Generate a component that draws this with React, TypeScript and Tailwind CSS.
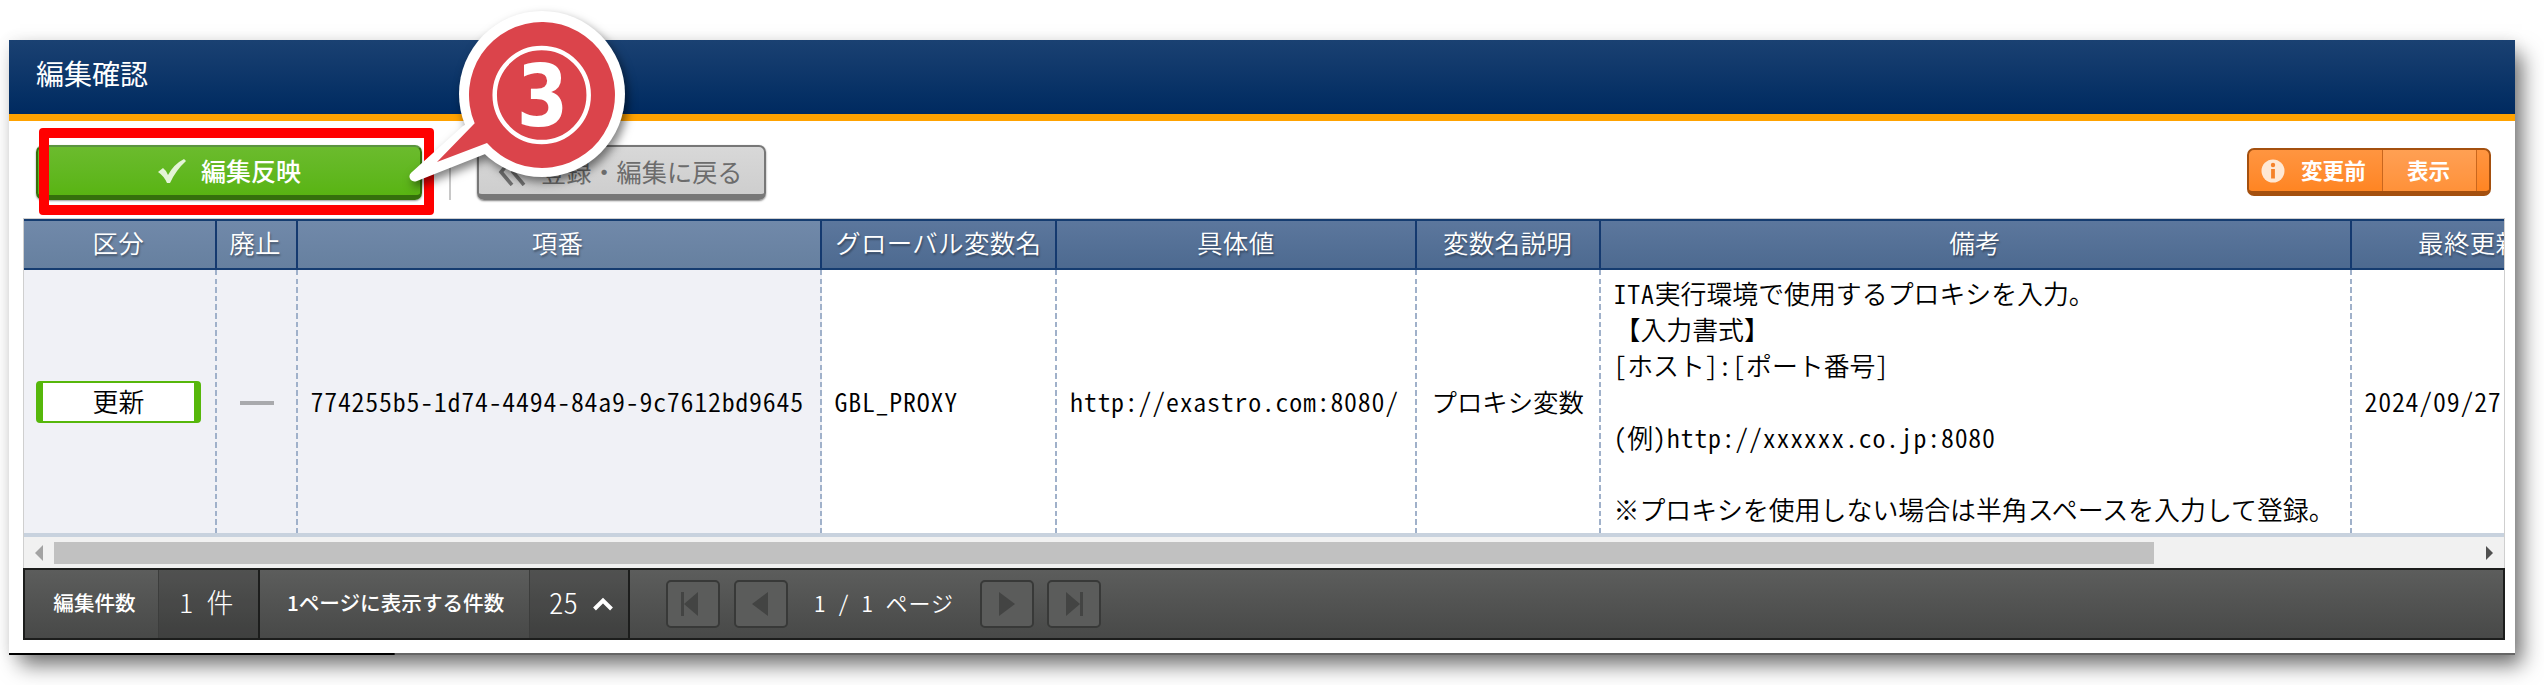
import React from "react";

const tx = "font-['Noto_Sans_CJK_JP',sans-serif]";

/* Text run with separate advance widths for half-width and full-width characters. */
function Run({ children }: { children: string }) {
  const parts = children.match(/[\x20-\x7e]+|[^\x20-\x7e]+/g) ?? [];
  return (
    <>
      {parts.map((p, i) =>
        /^[\x20-\x7e]/.test(p) ? (
          <span key={i} className="whitespace-pre tracking-[0.76px] [font-feature-settings:'hwid']">{p}</span>
        ) : (
          <span key={i} className="tracking-[0px]">{p}</span>
        )
      )}
    </>
  );
}

const columns = [
  { label: "区分", w: "w-[192.5px]", pin: true },
  { label: "廃止", w: "w-[81px]", pin: true },
  { label: "項番", w: "w-[524px]", pin: true },
  { label: "グローバル変数名", w: "w-[235.5px]", pin: false },
  { label: "具体値", w: "w-[359.5px]", pin: false },
  { label: "変数名説明", w: "w-[184px]", pin: false },
  { label: "備考", w: "w-[751px]", pin: false },
  { label: "最終更新日時", w: "w-[290px]", pin: false },
];

const notes = ["ITA実行環境で使用するプロキシを入力。", "【入力書式】", "[ホスト]:[ポート番号]", "", "(例)http://xxxxxx.co.jp:8080", "", "※プロキシを使用しない場合は半角スペースを入力して登録。"];

function cell(i: number) {
  switch (i) {
    case 0:
      return (
        <div className="ml-[12px] flex h-[42px] w-[165px] translate-y-px items-center justify-center rounded-[4px] border-x-[7px] border-y-2 border-[#56b70b] bg-white">
          <span className="-translate-y-px"><Run>更新</Run></span>
        </div>
      );
    case 1:
      return <div className="mx-auto h-[4px] w-[34px] translate-y-[2px] bg-[#a9aaad]" />;
    case 2:
      return <Run>774255b5-1d74-4494-84a9-9c7612bd9645</Run>;
    case 3:
      return <Run>GBL_PROXY</Run>;
    case 4:
      return <Run>http://exastro.com:8080/</Run>;
    case 5:
      return <span className="text-[25.4px]"><Run>プロキシ変数</Run></span>;
    case 6:
      return notes.map((n, k) => (
        <div key={k} className={k === 1 ? "h-9 pl-[1px]" : "h-9"}>
          <Run>{n}</Run>
        </div>
      ));
    default:
      return <Run>2024/09/27 13:52:08</Run>;
  }
}

function PageButton({ d, bar }: { d: string; bar?: string }) {
  return (
    <button className="flex h-[48px] w-[54px] items-center justify-center rounded-[5px] border-2 border-[#383938] bg-[#5b5c5b]">
      <svg width="30" height="28" viewBox="0 0 30 28" fill="#434443">
        <path d={d} />
        {bar && <path d={bar} />}
      </svg>
    </button>
  );
}

export default function App() {
  return (
    <div className={`${tx} relative h-[685px] w-[2544px] overflow-hidden bg-white pl-[9px] pt-[40px] text-black`}>
      <div className="flex h-[615px] w-[2506px] flex-col bg-white shadow-[9px_12px_20px_-2px_rgba(0,0,0,0.55),0_0_14px_rgba(0,0,0,0.08)]">
        <header className="flex h-[74px] shrink-0 items-center bg-linear-to-b from-[#1a4172] to-[#002a60] pl-[27px] text-[28px] font-normal text-white">
          <h1 className="-translate-y-[4px]">編集確認</h1>
        </header>
        <div className="h-[7px] shrink-0 bg-[#ffa200]" />

        <div className="flex h-[97px] shrink-0 items-start pl-[27px] pt-[24px]">
          <button className="flex h-[55px] w-[386px] items-center justify-center rounded-[7px] border-2 border-b-[5px] border-[#35700c] border-t-[#5a9440] bg-linear-to-b from-[#6bbb2d] to-[#59b412] text-[25px] font-medium text-white shadow-[0_1px_2px_rgba(0,0,0,0.4)]">
            <svg className="mr-[14px]" width="30" height="26" viewBox="0 0 30 26" fill="#e4f4d6">
              <path d="M1 14 L6 10 Q9 12 11 17 Q17 6 27 1 L29 3 Q19 12 13 25 L10 25 Q7 18 1 14Z" />
            </svg>
            <span>編集反映</span>
          </button>
          <div className="ml-[27px] h-[55px] w-[2px] bg-[#c8c8c8]" />
          <button className="ml-[26px] flex h-[55px] w-[289px] items-center rounded-[7px] border-2 border-b-[6px] border-[#777] bg-linear-to-b from-[#d8d8d8] to-[#cecece] pl-[19px] text-[25.2px] text-[#6c6c6c] shadow-[0_1px_2px_rgba(0,0,0,0.5)]">
            <svg className="mr-[14px] translate-y-px" width="29" height="28" viewBox="0 0 29 28" fill="none" stroke="#6f6f6f" strokeWidth="3.6">
              <path d="M14 1 L3 14 L14 27 M26 1 L15 14 L26 27" />
            </svg>
            <span className="translate-y-px whitespace-nowrap">登録・編集に戻る</span>
          </button>
          <div className="ml-auto mr-[24px] mt-[3px] flex h-[48px] w-[244px] overflow-hidden rounded-[7px] border-2 border-b-[5px] border-[#a4500f] bg-linear-to-b from-[#ff9540] to-[#ff8522] text-[21.6px] font-bold text-white">
            <div className="flex w-[133px] items-center pl-[12px]">
              <svg width="24" height="24" viewBox="0 0 24 24">
                <circle cx="12" cy="12" r="11.5" fill="#ffe8d4" />
                <circle cx="12" cy="6" r="2.2" fill="#f5822a" />
                <path d="M10.1 10h3.8v9.5h-3.8z" fill="#f5822a" />
              </svg>
              <span className="ml-[16px]">変更前</span>
            </div>
            <div className="flex w-[95px] items-center justify-center border-x border-[#c9661d] bg-white/10">
              <span className="-translate-x-px">表示</span>
            </div>
          </div>
        </div>

        <div className="ml-[14px] h-[350px] w-[2482px] shrink-0 overflow-hidden border border-b-0 border-[#cfcfcf]">
          <div className="flex h-[51px] w-[2620px] border-y-2 border-[#153c70]">
            {columns.map((c) => (
              <div key={c.label} className={`${c.w} flex shrink-0 items-center justify-center border-r-2 border-[#14396f] text-[25.5px] font-[350] text-white [text-shadow:1px_2px_2px_rgba(0,0,0,0.35)] ${c.pin ? "bg-linear-to-b from-[#7189aa] to-[#66809f]" : "bg-linear-to-b from-[#5c779d] to-[#4d6a90]"}`}>
                <span className={`-translate-y-[2px] whitespace-nowrap tracking-[0.3px] ${c.pin ? "-translate-x-[1px]" : ""}`}>{c.label}</span>
              </div>
            ))}
          </div>
          <div className="flex h-[267px] w-[2620px] border-b-[4px] border-[#c8d2de] text-[25.9px] leading-9 font-[350]">
            {columns.map((c, i) => (
              <div key={c.label} className={`${c.w} relative flex shrink-0 flex-col justify-center whitespace-nowrap pb-[2px] ${i < 2 ? "" : i === 5 ? "pl-[15px]" : "pl-[13px]"} ${c.pin ? "bg-[#f0f1f6]" : "bg-white"}`}>
                <div>{cell(i)}</div>
                <i className="absolute right-0 top-0 h-full w-[2px] bg-[repeating-linear-gradient(to_bottom,#a0b1ca_0_5.5px,transparent_5.5px_8.6px)]" />
              </div>
            ))}
          </div>
          <div className="flex h-[31px] w-[2480px] items-center bg-[#f1f1f1] pl-[11px] pr-[11px]">
            <svg width="8" height="16" viewBox="0 0 8 16" fill="#a3a3a3"><path d="M8 0V16L0 8z" /></svg>
            <div className="ml-[11px] h-[22px] w-[2100px] bg-[#c1c1c1]" />
            <svg className="ml-auto" width="7" height="14" viewBox="0 0 7 14" fill="#505050"><path d="M0 0V14L7 7z" /></svg>
          </div>
        </div>

        <footer className="ml-[14px] flex h-[72px] w-[2482px] shrink-0 border-2 border-[#1c1d1c] bg-linear-to-b from-[#5c5d5c] to-[#484948] text-white">
          <div className="flex w-[133px] items-center justify-center pl-[6px] text-[20.6px] font-medium"><span className="-translate-y-[2px]">編集件数</span></div>
          <div className="flex w-[102px] items-center justify-center border-l border-r-2 border-l-[#3c3d3c] border-r-[#1c1d1c] bg-black/12 text-[27px] font-light">
            <span className="-translate-x-[2px] -translate-y-[2px] whitespace-pre [font-feature-settings:'hwid']">1 件</span>
          </div>
          <div className="flex w-[269px] items-center pl-[27px] text-[20.6px] font-medium"><span className="-translate-y-[2px] whitespace-nowrap">1ページに表示する件数</span></div>
          <div className="flex w-[101px] items-center border-l border-r-2 border-l-[#3c3d3c] border-r-[#1c1d1c] bg-black/12 pl-[19px] text-[29px] font-light">
            <span className="-translate-y-[2px] [font-feature-settings:'hwid']">25</span>
            <svg className="ml-[15px]" width="20" height="14" viewBox="0 0 20 14" fill="none" stroke="white" strokeWidth="4"><path d="M1.5 12 L10 3.5 L18.5 12" /></svg>
          </div>
          <div className="flex items-center pl-[36px]">
            <PageButton d="M20 2V26L6 14z" bar="M3 2h3v24h-3z" />
            <div className="w-[14px]" />
            <PageButton d="M22 2V26L6 14z" />
            <div className="flex w-[192px] justify-center text-[22px] font-[350]">
              <span className="-translate-y-[2px] whitespace-pre tracking-[0.9px] [font-feature-settings:'hwid']">1 / 1 ページ</span>
            </div>
            <PageButton d="M7 2V26L23 14z" />
            <div className="w-[13px]" />
            <PageButton d="M7 2V26L21 14z" bar="M21 2h3v24h-3z" />
          </div>
        </footer>
        <div className="mt-auto h-[2px] bg-linear-to-r from-black from-[385px] to-[#666] to-[386px]" />
      </div>

      <div className="absolute left-[39px] top-[128px] h-[87px] w-[395px] rounded-[4px] border-[10px] border-[#ff0000]" />

      <svg className="absolute left-[390px] top-0 overflow-visible" width="260" height="220" viewBox="390 0 260 220">
        <g className="[filter:drop-shadow(3px_5px_5px_rgba(0,0,0,0.5))]" fill="#fff">
          <circle cx="542" cy="94" r="83" />
          <path d="M414.5 176.5 L466 130 L500 110 L484 149 Z" stroke="#fff" strokeWidth="10" strokeLinejoin="round" />
        </g>
        <path d="M474.7 123.3 A73 73 0 1 1 487 143 L437 162 Z" fill="#db444b" />
        <circle cx="541.7" cy="95" r="47" fill="none" stroke="#fff" strokeWidth="4.5" />
        <text transform="translate(542.5 126) scale(0.86 1)" textAnchor="middle" fill="#fff" className="font-['DejaVu_Sans',sans-serif] text-[86px] font-bold">3</text>
      </svg>
    </div>
  );
}
